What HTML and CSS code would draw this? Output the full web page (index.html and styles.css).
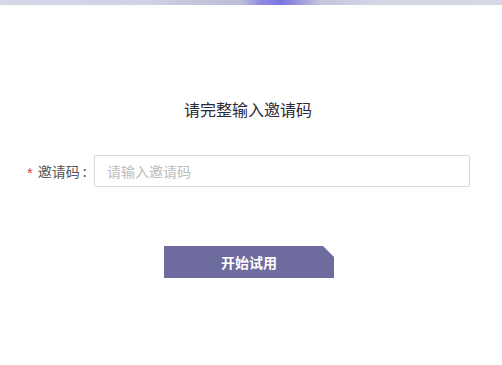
FILE: index.html
```html
<!DOCTYPE html>
<html lang="zh-CN">
<head>
<meta charset="utf-8">
<title>邀请码</title>
<link rel="stylesheet" href="styles.css">
</head>
<body>
<div class="topbar"></div>
<main class="page">
  <h2 class="title">请完整输入邀请码</h2>
  <div class="form-row">
    <label class="label" for="code"><span class="req">*</span>邀请码<span class="colon">:</span></label>
    <input id="code" class="input" type="text" placeholder="请输入邀请码">
  </div>
  <div class="actions">
    <button class="btn" type="button">开始试用</button>
  </div>
</main>
</body>
</html>
```
FILE: styles.css
```css
html, body {
  margin: 0;
  padding: 0;
  background: #ffffff;
  font-family: "Noto Sans CJK SC", "Noto Sans", sans-serif;
}
.topbar {
  height: 5px;
  background: linear-gradient(90deg,
    #d6d7e7 0%, #d0d1e3 30%, #c3c3da 40%, #bdbdd8 48%,
    #8f8ae0 52%, #7b76e2 56%, #9692dc 59%, #c6c6dc 64%,
    #d4d5e5 75%, #d6d7e7 100%);
}
.page {
  display: flex;
  flex-direction: column;
}
.title {
  margin: 93px 0 0 -6px;
  font-size: 16px;
  font-weight: normal;
  line-height: 22px;
  text-align: center;
  color: #2a2a3c;
}
.form-row {
  display: flex;
  align-items: center;
  margin-top: 35px;
  padding-left: 27px;
}
.label {
  width: 67px;
  font-size: 14px;
  color: #555555;
  display: flex;
  align-items: center;
}
.req {
  color: #e0453a;
  font-family: "Liberation Sans", sans-serif;
  font-size: 15px;
  margin-right: 5px;
  position: relative;
  top: 1px;
}
.colon {
  margin-left: 3px;
}
.input {
  box-sizing: border-box;
  width: 376px;
  height: 32px;
  border: 1px solid #d9d9d9;
  border-radius: 2px;
  padding: 0 12px;
  font-family: "Noto Sans CJK SC", sans-serif;
  font-size: 14px;
  color: #333;
  outline: none;
  margin: 0;
}
.input::placeholder {
  color: #bcbcbc;
}
.actions {
  display: flex;
  margin-top: 59px;
  padding-left: 164px;
}
.btn {
  width: 170px;
  height: 32px;
  border: 0;
  margin: 0;
  padding: 0;
  background: #6e6b9f;
  color: #ffffff;
  font-family: "Noto Sans CJK SC", sans-serif;
  font-size: 14px;
  font-weight: bold;
  clip-path: polygon(0 0, calc(100% - 11px) 0, 100% 11px, 100% 100%, 0 100%);
  cursor: pointer;
}
```
